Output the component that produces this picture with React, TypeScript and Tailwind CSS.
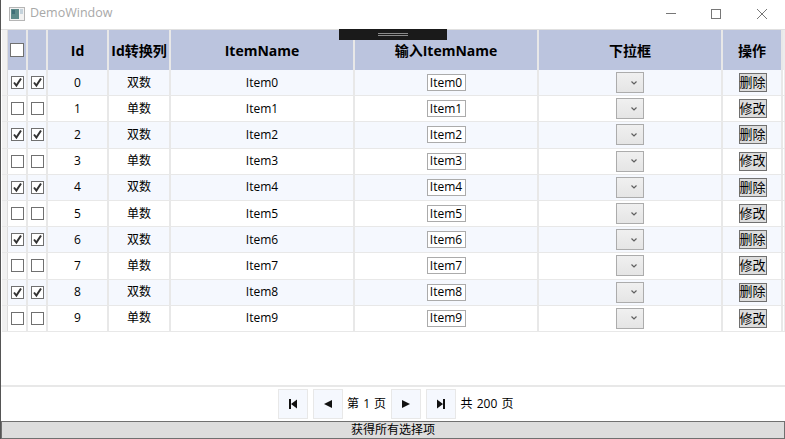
const font = "font-['Open_Sans','Noto_Sans_CJK_SC',sans-serif]";

const colWidths = "grid-cols-[20px_20px_61px_62px_184px_184px_184px_60px]";

const headers = ["", "", "Id", "Id转换列", "ItemName", "输入ItemName", "下拉框", "操作"];

function Check({ checked, big }: { checked: boolean; big?: boolean }) {
  return (
    <div
      className={
        big
          ? "h-[14px] w-[14px] border border-[#707070] bg-white"
          : "flex h-[13px] w-[13px] items-center justify-center border border-[#707070] bg-white"
      }
    >
      {checked && (
        <svg width="11" height="11" viewBox="0 0 11 11">
          <path d="M2 5.5 L4.4 8.5 L9 1.5" fill="none" stroke="#333" strokeWidth="2" />
        </svg>
      )}
    </div>
  );
}

function Row({ i }: { i: number }) {
  const even = i % 2 === 0;
  const cell = "flex h-full items-center justify-center border-r-2 border-[#e8e8e8]";
  return (
    <div className="flex h-[26.2px] border-b border-[#e8e8e8]">
      <div className="w-[6px] shrink-0 border-r border-[#dcdcdc] bg-[#f1f1f1]" />
      <div className={`grid flex-1 ${colWidths} ${even ? "bg-[#f5f8fe]" : "bg-white"}`}>
        <div className={cell}>
          <Check checked={even} />
        </div>
        <div className={cell}>
          <Check checked={even} />
        </div>
        <div className={cell}>{i}</div>
        <div className={cell}>{even ? "双数" : "单数"}</div>
        <div className={cell}>Item{i}</div>
        <div className={cell}>
          <div className="flex h-[17px] w-[39px] items-center justify-center border border-[#ababab] bg-white">
            Item{i}
          </div>
        </div>
        <div className={cell}>
          <div className="flex h-[21px] w-[28px] items-center justify-end border border-[#acacac] bg-gradient-to-b from-[#f0f0f0] to-[#e5e5e5] pr-[6px]">
            <svg width="6" height="4" viewBox="0 0 6 4">
              <path d="M0.5 0.5 L3 3 L5.5 0.5" fill="none" stroke="#606060" strokeWidth="1.2" />
            </svg>
          </div>
        </div>
        <div className={cell}>
          <button className="ml-px flex h-[19px] w-[28px] items-center justify-center border border-[#707070] bg-[#dddddd] text-[13px] text-black">
            {even ? "删除" : "修改"}
          </button>
        </div>
      </div>
      <div className="w-[2px] shrink-0 border-r border-[#ececec] bg-white" />
    </div>
  );
}

function PageBtn({ d }: { d: string }) {
  return (
    <button className="flex h-[30px] w-[30px] items-center justify-center border border-[#e8e8e8] bg-[#f5f8fe]">
      <svg width="12" height="12" viewBox="0 0 12 12">
        <path d={d} fill="#111" />
      </svg>
    </button>
  );
}

export default function App() {
  return (
    <div className={`${font} relative flex h-[439px] w-[785px] flex-col overflow-hidden border-l border-[#555] bg-white text-[12px] text-black`}>
      {/* Title bar */}
      <div className="flex h-[29px] shrink-0 items-center pb-[2px] pl-[8px]">
        <svg width="16" height="14" viewBox="0 0 16 14" className="mr-[5px]">
          <rect x="0.5" y="0.5" width="15" height="13" fill="#f2f2f2" stroke="#b5b5b5" />
          <rect x="2" y="2" width="8" height="10" fill="#5d8a8a" />
          <rect x="3" y="3" width="3" height="4" fill="#3f6f78" />
          <rect x="11" y="2" width="3" height="5" fill="#c5d3dc" />
        </svg>
        <span className="text-[12.5px] text-[#a8a8a8]">DemoWindow</span>
        <div className="ml-auto flex items-center">
          <div className="mr-[35px] h-px w-[10px] bg-[#777]" />
          <div className="mr-[36px] h-[10px] w-[10px] border border-[#777]" />
          <svg width="10" height="10" viewBox="0 0 10 10" className="mr-[18px]">
            <path d="M0 0 L10 10 M10 0 L0 10" stroke="#777" strokeWidth="1" />
          </svg>
        </div>
      </div>

      {/* Table */}
      <div className="flex-1 border-t border-[#e0e0e0] pl-px">
        <div className="flex h-[40px]">
          <div className="w-[6px] shrink-0 border-r border-[#dcdcdc] bg-[#f1f1f1]" />
          <div className={`grid flex-1 ${colWidths} bg-[#bbc4de]`}>
            {headers.map((h, i) => (
              <div
                key={i}
                className="flex items-center justify-center border-r-2 border-[#e8e8e8] text-[14px] font-bold"
              >
                {i === 0 ? <Check checked={false} big /> : h}
              </div>
            ))}
          </div>
          <div className="w-[2px] shrink-0 bg-[#ececec]" />
        </div>
        {Array.from({ length: 10 }, (_, i) => (
          <Row key={i} i={i} />
        ))}
      </div>

      {/* Pager */}
      <div className="flex h-[36px] shrink-0 items-center justify-center border-t-2 border-[#e8e8e8] pl-[5px] [word-spacing:1px]">
        <PageBtn d="M2 1 H4 V11 H2 Z M10 1.5 V10.5 L4 6 Z" />
        <div className="w-[5px]" />
        <PageBtn d="M10 2 V10 L2 6 Z" />
        <span className="mx-[4px] w-[40px] text-center whitespace-nowrap">第 1 页</span>
        <PageBtn d="M2 2 V10 L10 6 Z" />
        <div className="w-[5px]" />
        <PageBtn d="M2 1.5 V10.5 L8 6 Z M8 1 H10 V11 H8 Z" />
        <span className="ml-[5px] whitespace-nowrap">共 200 页</span>
      </div>

      {/* Bottom button */}
      <button className="flex h-[18px] shrink-0 items-center justify-center border border-[#707070] bg-[#dddddd] text-[12px] text-black">
        获得所有选择项
      </button>

      {/* Debug tool strip over the header */}
      <div className="absolute left-[338px] top-[29px] flex h-[11px] w-[108px] items-center justify-center bg-[#1a1a1a]">
        <div className="h-[3px] w-[30px] border-y border-[#8a8a8a]" />
      </div>
    </div>
  );
}
